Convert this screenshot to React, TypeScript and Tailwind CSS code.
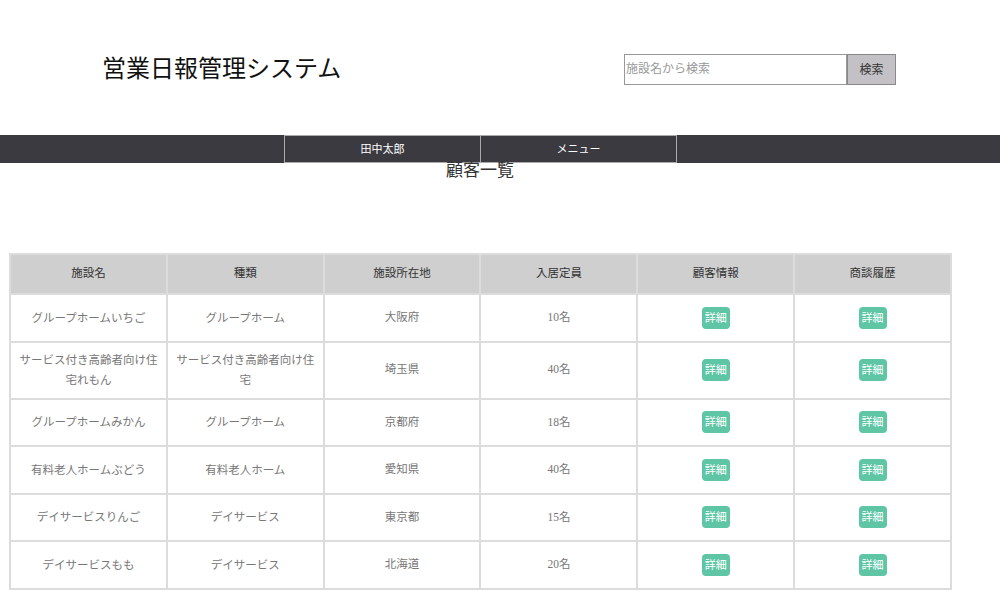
import React from 'react';

type Row = { name: string; kind: string; place: string; cap: string };

const rows: Row[] = [
  { name: 'グループホームいちご', kind: 'グループホーム', place: '大阪府', cap: '10名' },
  { name: 'サービス付き高齢者向け住宅れもん', kind: 'サービス付き高齢者向け住宅', place: '埼玉県', cap: '40名' },
  { name: 'グループホームみかん', kind: 'グループホーム', place: '京都府', cap: '18名' },
  { name: '有料老人ホームぶどう', kind: '有料老人ホーム', place: '愛知県', cap: '40名' },
  { name: 'デイサービスりんご', kind: 'デイサービス', place: '東京都', cap: '15名' },
  { name: 'デイサービスもも', kind: 'デイサービス', place: '北海道', cap: '20名' },
];

const heads = ['施設名', '種類', '施設所在地', '入居定員', '顧客情報', '商談履歴'];

const Detail = () => (
  <button className="h-[22px] w-[28px] rounded-[4px] bg-[#5ec5a5] text-[11px] text-white">詳細</button>
);

export default function App() {
  return (
    <div className="h-[600px] w-[1000px] overflow-hidden bg-white font-['Liberation_Serif','Noto_Sans_CJK_JP',serif] text-[#333]">
      <header className="flex h-[135px] items-center pl-[102px] pr-[104px] pt-[2px]">
        <h1 className="flex-1 text-[24px] leading-none text-[#111]">営業日報管理システム</h1>
        <div className="flex pt-[2px]">
          <input
            placeholder="施設名から検索"
            className="h-[31px] w-[223px] border border-[#999] px-[1px] text-[12px] outline-none placeholder:text-[#999]"
          />
          <button className="h-[31px] w-[49px] border border-[#888] bg-[#c3c1c6] text-[12px] text-[#333]">検索</button>
        </div>
      </header>

      <nav className="flex h-[28px] justify-center bg-[#3b3a41] pr-[39px]">
        <div className="flex w-[197px] items-center justify-center border border-[#aaa] text-[11px] text-white">田中太郎</div>
        <div className="flex w-[196px] items-center justify-center border border-l-0 border-[#aaa] text-[11px] text-white">メニュー</div>
      </nav>
      <h2 className="-mt-[3px] pr-[40px] text-center text-[17px] leading-[22px] text-[#333]">顧客一覧</h2>

      <div className="pl-[9px] pt-[71px]">
        <table className="w-[943px] table-fixed border-collapse text-center text-[11.5px]">
          <thead>
            <tr className="h-[40px] bg-[#cfcfcf]">
              {heads.map((h) => (
                <th key={h} className="border-2 border-[#dcdcdc] font-normal text-[#333]">{h}</th>
              ))}
            </tr>
          </thead>
          <tbody className="text-[#777]">
            {rows.map((r, i) => (
              <tr key={r.name} className={i === 1 ? 'h-[57px]' : 'h-[47.5px]'}>
                <td className="border-2 border-[#dcdcdc] px-[8px] leading-[20px]">{r.name}</td>
                <td className="border-2 border-[#dcdcdc] px-[8px] leading-[20px]">{r.kind}</td>
                <td className="border-2 border-[#dcdcdc]">{r.place}</td>
                <td className="border-2 border-[#dcdcdc]">{r.cap}</td>
                <td className="border-2 border-[#dcdcdc]"><Detail /></td>
                <td className="border-2 border-[#dcdcdc]"><Detail /></td>
              </tr>
            ))}
          </tbody>
        </table>
      </div>
    </div>
  );
}
